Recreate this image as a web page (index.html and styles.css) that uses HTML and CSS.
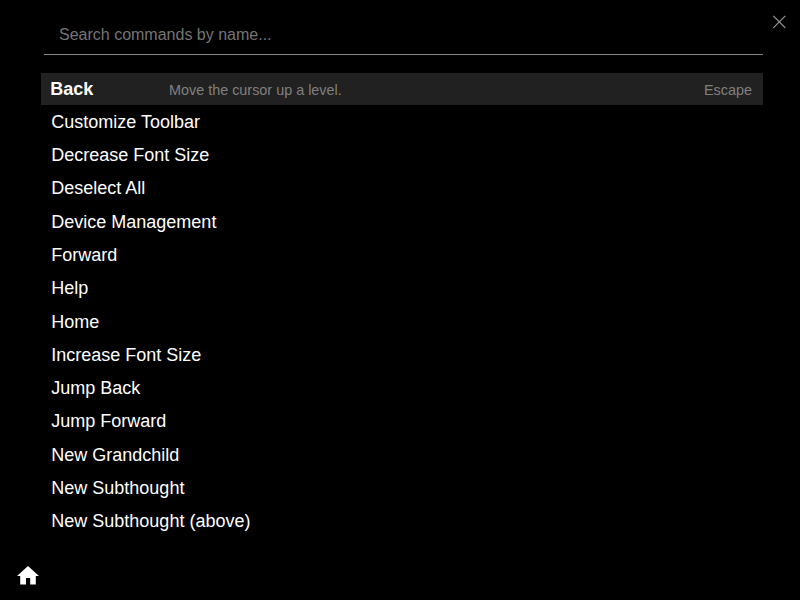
FILE: index.html
```html
<!DOCTYPE html>
<html lang="en">
<head>
<meta charset="utf-8">
<title>Command Palette</title>
<link rel="stylesheet" href="styles.css">
</head>
<body>
<main class="palette">
  <input class="search" type="text" placeholder="Search commands by name...">
  <ul class="commands">
    <li class="command selected"><b class="label">Back</b><span class="description">Move the cursor up a level.</span><span class="shortcut">Escape</span></li>
    <li class="command">Customize Toolbar</li>
    <li class="command">Decrease Font Size</li>
    <li class="command">Deselect All</li>
    <li class="command">Device Management</li>
    <li class="command">Forward</li>
    <li class="command">Help</li>
    <li class="command">Home</li>
    <li class="command">Increase Font Size</li>
    <li class="command">Jump Back</li>
    <li class="command">Jump Forward</li>
    <li class="command">New Grandchild</li>
    <li class="command">New Subthought</li>
    <li class="command">New Subthought (above)</li>
  </ul>
</main>
<svg class="close" viewBox="0 0 14 14"><path d="M1.3 .9L13.3 12.9M13.3 .9L1.3 12.9"/></svg>
<svg class="home" viewBox="0 0 22 19"><path d="M11 0L22 10H18.8V18.5H13.2V12H9V18.5H3.2V10H0Z"/></svg>
</body>
</html>
```
FILE: styles.css
```css
* { box-sizing: border-box; }
body {
  margin: 0;
  height: 600px;
  overflow: hidden;
  background: #000;
  color: #fff;
  font-family: Helvetica, "Liberation Sans", Arial, sans-serif;
  font-size: 18px;
}
.palette { padding: 15px 37px 0 41px; }
.search {
  display: block;
  width: 719px;
  height: 40px;
  margin: 0 0 18px 3px;
  padding: 0 15px;
  border: 0;
  border-bottom: 1px solid #888;
  border-radius: 0;
  background: transparent;
  color: #fff;
  font: 16px Helvetica, "Liberation Sans", Arial, sans-serif;
  outline: 0;
}
.search::placeholder { color: #757575; }
.commands { margin: 0; padding: 0; list-style: none; }
.command {
  display: flex;
  align-items: center;
  height: 33.27px;
  padding: 0 11px 0 10.3px;
  white-space: nowrap;
}
.selected {
  height: 32px;
  margin-bottom: 0.8px;
  padding-left: 9.2px;
  background: #212121;
}
.label { width: 118.8px; }
.description, .shortcut { position: relative; top: 1px; color: #808080; font-size: 14.4px; }
.shortcut { margin-left: auto; }
.close {
  position: absolute;
  left: 772px;
  top: 15px;
  width: 14px;
  height: 14px;
  fill: none;
  stroke: #999;
  stroke-width: 1.2;
}
.home {
  position: absolute;
  left: 17px;
  top: 566px;
  width: 22px;
  height: 19px;
  fill: #fff;
}
```
